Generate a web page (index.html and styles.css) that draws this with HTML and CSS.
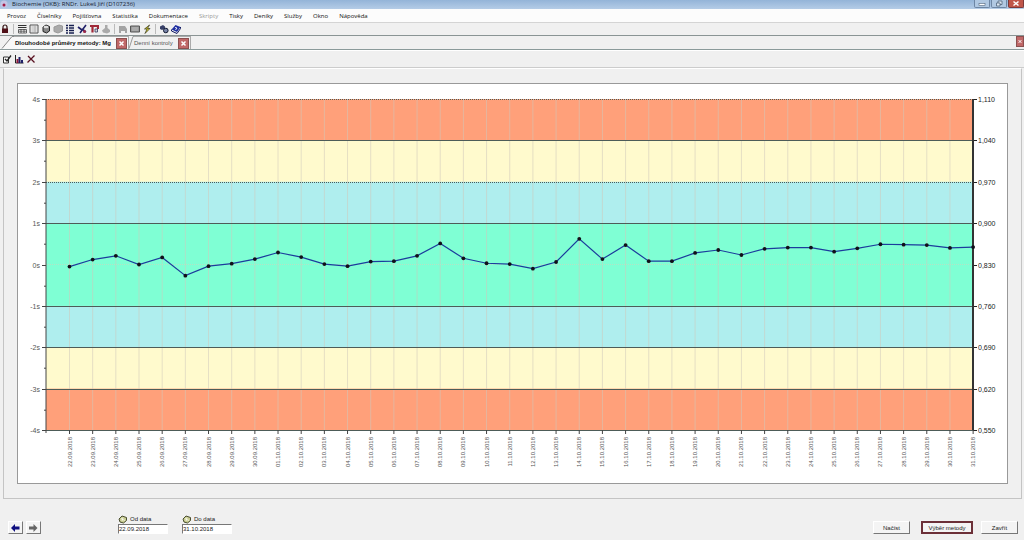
FILE: index.html
```
<!DOCTYPE html>
<html lang="cs">
<head>
<meta charset="utf-8">
<title>Biochemie (OKB)</title>
<link rel="stylesheet" href="styles.css">
</head>
<body>
<header class="titlebar">
  <svg class="app-icon" viewBox="0 0 8 8"><circle cx="4" cy="4" r="3.5" fill="#c4c4e4"/><circle cx="4" cy="5" r="1.5" fill="#a01840"/></svg>
  <span class="title">Biochemie (OKB): RNDr. Lukeš Jiří (D107236)</span>
  <div class="window-buttons">
    <button class="win" aria-label="Minimalizovat"><svg viewBox="0 0 16 8"><rect x="5" y="3.500" width="6" height="2" fill="#fff" stroke="#50647c" stroke-width=".6"/></svg></button>
    <button class="win" aria-label="Obnovit"><svg viewBox="0 0 16 8"><path d="M7 3V1h4v3.500H9M5.500 3H9v3H5.500z" fill="#dce8f4" stroke="#50647c" stroke-width=".8"/></svg></button>
    <button class="win win-close" aria-label="Zavřít okno"><svg viewBox="0 0 16 8"><path d="M5.500 1.500l5 4M10.500 1.500l-5 4" stroke="#fff" stroke-width="1.500"/></svg></button>
  </div>
</header>
<nav class="menu">
  <a href="#">Provoz</a><a href="#">Číselníky</a><a href="#">Pojišťovna</a><a href="#">Statistika</a><a href="#">Dokumentace</a><a href="#" class="disabled">Skripty</a><a href="#">Tisky</a><a href="#">Deníky</a><a href="#">Služby</a><a href="#">Okno</a><a href="#">Nápověda</a>
</nav>
<div class="toolbar">
  <button aria-label="Zámek"><svg viewBox="0 0 10 10"><path d="M3 5V3a2 2 0 0 1 4 0v2" fill="none" stroke="#301010" stroke-width="1.200"/><rect x="2" y="4.500" width="6" height="4.500" fill="#501018"/></svg></button>
  <i class="sep"></i>
  <button aria-label="Tabulka"><svg viewBox="0 0 10 10"><path d="M1 1.500h8.500M1 3.500h8.500" stroke="#333" stroke-width="1"/><path d="M1.500 5.500h8v3.500h-8zM1.500 7.200h8M4 5v4M7 5v4" fill="#fff" stroke="#444" stroke-width=".8"/></svg></button>
  <button aria-label="Formulář"><svg viewBox="0 0 10 10"><path d="M1 1h8v8H1z" fill="#eee" stroke="#555"/><path d="M2.500 3h5M2.500 5h5M2.500 7h5M6 2v6" stroke="#aaa" stroke-width=".8"/></svg></button>
  <button aria-label="Databáze"><svg viewBox="0 0 10 10"><path d="M2 3l3-2 3.500 1.500V7L5.500 9 2 7.500z" fill="#888" stroke="#222"/><ellipse cx="5" cy="3" rx="2.500" ry="1.300" fill="#ddd"/></svg></button>
  <button aria-label="Dokumenty"><svg viewBox="0 0 10 10"><path d="M1 3l5-2 3.500 1v5L5 9 1 7.500z" fill="#aaa" stroke="#999"/></svg></button>
  <button aria-label="Seznam"><svg viewBox="0 0 10 10"><path d="M1 1.500h2M1 4h2M1 6.500h2M1 9h2M4 1.500h5M4 4h5M4 6.500h5M4 9h5" stroke="#182050" stroke-width="1.500"/></svg></button>
  <button aria-label="Upravit"><svg viewBox="0 0 10 10"><path d="M1 3l4 3M9 1L3 9M5 5l4 3" stroke="#202068" stroke-width="1.600"/><circle cx="7.500" cy="7.500" r="1.500" fill="#a02848"/></svg></button>
  <button aria-label="Vzorek"><svg viewBox="0 0 10 10"><path d="M1 2h8v3M3.500 2v6.500" fill="none" stroke="#a02838" stroke-width="2.200"/><path d="M6 5h2.500v3H6z" fill="#ddd" stroke="#30355c" stroke-width=".8"/></svg></button>
  <button aria-label="Zvonek"><svg viewBox="0 0 10 10"><path d="M4 1h2.500v3L9 6v2L6 9.500 2 8.500 1 6.500 4 4z" fill="#aaa"/></svg></button>
  <i class="sep"></i>
  <button aria-label="Tisk"><svg viewBox="0 0 10 10"><path d="M1 2h6l2 3v4H7V7H3v2H1z" fill="#a4a4a4"/></svg></button>
  <button aria-label="Obrazovka"><svg viewBox="0 0 10 10"><path d="M.5 2h9v6h-9z" fill="#999" stroke="#555"/><path d="M2 4h6M2 6h6" stroke="#ccc" stroke-width=".7"/></svg></button>
  <button aria-label="Blesk"><svg viewBox="0 0 10 10"><path d="M7.500 1L2.500 5h2.500L3 9.500 8 4.500H5.500z" fill="#d8d020" stroke="#303020" stroke-width=".7"/></svg></button>
  <i class="sep"></i>
  <button aria-label="Hledat"><svg viewBox="0 0 10 10"><path d="M1 2.500l3-1.500 2 1.500v2L3 6 1 5z" fill="#384068"/><circle cx="6.800" cy="6.500" r="2.300" fill="#7884a8" stroke="#101830"/></svg></button>
  <button aria-label="Nápověda"><svg viewBox="0 0 10 10"><path d="M.5 5.500L4.500 1l5 2L6 8z" fill="#2030a0"/><path d="M.5 5.500v1.500L6 9.500 9.500 4.500V3" fill="none" stroke="#101860"/><path d="M4 3.500l2 .5-1.500 2" fill="none" stroke="#fff" stroke-width=".9"/></svg></button>
</div>
<div class="tabs">
  <svg class="slant" viewBox="0 0 14 13"><path d="M0 12.500h3L12 .5h2V13H0z" fill="#f8f8f8"/><path d="M2 12.500L12 .5h2" fill="none" stroke="#888"/></svg>
  <div class="tab tab-active"><span>Dlouhodobé průměry metody: Mg</span><button class="close" aria-label="Zavřít kartu"><svg viewBox="0 0 9 9"><path d="M2.500 2.500l4 4M6.500 2.500l-4 4" stroke="#fff" stroke-width="1.500"/></svg></button></div>
  <svg class="slant slant-small" viewBox="0 0 5 13"><path d="M0 12.500L4 .5h1" fill="none" stroke="#999"/></svg>
  <div class="tab"><span>Denní kontroly</span><button class="close" aria-label="Zavřít kartu"><svg viewBox="0 0 9 9"><path d="M2.500 2.500l4 4M6.500 2.500l-4 4" stroke="#fff" stroke-width="1.500"/></svg></button></div>
  <button class="close close-all" aria-label="Zavřít vše"><svg viewBox="0 0 9 9"><path d="M2.500 2.500l4 4M6.500 2.500l-4 4" stroke="#fff" stroke-width="1.500"/></svg></button>
</div>
<div class="subtoolbar">
  <button aria-label="Vlastnosti"><svg viewBox="0 0 10 10"><path d="M1.500 3h5v6h-5z" fill="#fff" stroke="#333"/><path d="M3 5l2 2 4-5.500" fill="none" stroke="#222" stroke-width="1.300"/></svg></button>
  <button aria-label="Graf"><svg viewBox="0 0 10 10"><path d="M1.500 1v8H9.500" fill="none" stroke="#222"/><path d="M2.500 5h2v4h-2z" fill="#901838"/><path d="M4.500 3h2v6h-2zM7 6h2v3H7z" fill="#202068"/></svg></button>
  <button aria-label="Odstranit"><svg viewBox="0 0 10 10"><path d="M2 2l6.500 6.500M8.500 1.500L1.500 8.500" stroke="#581020" stroke-width="1.300"/></svg></button>
</div>
<main class="panel">
  <svg id="chart" class="chart" viewBox="0 0 989 399" role="img" aria-label="Dlouhodobé průměry metody Mg"></svg>
</main>
<footer class="bottom">
  <div class="arrows">
    <button class="btn arrow" aria-label="Předchozí"><svg viewBox="0 0 9 8"><path d="M0 4l4-4v2.500h4.500v3H4V8z" fill="#101080"/></svg></button>
    <button class="btn arrow" aria-label="Další"><svg viewBox="0 0 9 8"><path d="M8.500 4l-4-4v2.500H0v3h4.500V8z" fill="#666"/></svg></button>
  </div>
  <div class="dates">
    <div class="field"><label for="from"><svg viewBox="0 0 10 9"><path d="M1 4l3-3 4.500 1.500v3L5.500 8 2 7z" fill="#c8cc90" stroke="#4a4e30"/><path d="M3 3.500l4 2M5 2.500L4 6" stroke="#fff" stroke-width=".7"/></svg>Od data</label><input id="from" value="22.09.2018"></div>
    <div class="field"><label for="to"><svg viewBox="0 0 10 9"><path d="M1 4l3-3 4.500 1.500v3L5.500 8 2 7z" fill="#c8cc90" stroke="#4a4e30"/><path d="M3 3.500l4 2M5 2.500L4 6" stroke="#fff" stroke-width=".7"/></svg>Do data</label><input id="to" value="31.10.2018"></div>
  </div>
  <div class="actions">
    <button class="btn">Načíst</button>
    <button class="btn btn-default">Výběr metody</button>
    <button class="btn btn-exit">Zavřít</button>
  </div>
</footer>
<script src="chart.js"></script>
</body>
</html>
```
FILE: styles.css
```
* { box-sizing: border-box; }
body {
  margin: 0;
  min-height: 100vh;
  display: flex;
  flex-direction: column;
  background: #f0f0f0;
  color: #222;
  font: 6px/8px "Liberation Sans", Arial, sans-serif;
}
button, input { font: inherit; color: inherit; margin: 0; }
button { display: flex; align-items: center; justify-content: center; padding: 0; border: 0; background: none; }
svg { display: block; }

.titlebar {
  display: flex;
  height: 9px;
  align-items: flex-start;
  background: linear-gradient(#94b4d8, #b4cce6);
}
.app-icon { width: 8px; height: 8px; }
.title { margin-left: 4px; font: 6px/9px "Open Sans", sans-serif; color: #14202e; }
.window-buttons { display: flex; margin-left: auto; gap: 1px; }
.win { width: 16px; height: 8px; background: #b0c8e2; border: 1px solid #6d86a4; border-top: 0; border-radius: 0 0 2px 2px; }
.win svg { width: 16px; height: 8px; flex: none; }
.win-close { background: #c0564a; border-color: #7c3a3a; }

.menu {
  display: flex;
  gap: 11px;
  height: 14px;
  padding: 3px 7px 0;
  background: #fcfcfc;
  border-bottom: 1px solid #d4d4d4;
  font-family: "Open Sans", sans-serif;
}
.menu a { color: #111; text-decoration: none; }
.menu .disabled { color: #999; }

.toolbar { display: flex; height: 13px; gap: 2px; align-items: center; border-bottom: 1px solid #8a9494; }
.toolbar svg, .subtoolbar svg { width: 10px; height: 10px; }
.sep { width: 1px; height: 10px; margin: 0 1px; background: #bbb; }

.tabs { display: flex; height: 14px; border-bottom: 1px solid #8a9a9a; }
.slant { width: 14px; height: 13px; }
.slant-small { width: 5px; }
.tab { display: flex; align-items: center; gap: 5px; padding-right: 1px; border-top: 1px solid #aaa; border-right: 1px solid #aaa; }
.tab span { color: #555; }
.tab-active { background: #f8f8f8; }
.tab-active span { padding-left: 1px; font-weight: bold; color: #111; }
.close { width: 11px; height: 11px; background: #c06868; border: 1px solid #8c5050; }
.close svg { width: 9px; height: 9px; }
.close-all { margin-left: auto; width: 8px; overflow: hidden; }

.subtoolbar { display: flex; gap: 2px; height: 18px; padding: 3px 2px; border-top: 1px solid #fff; border-bottom: 1px solid #ccc; }

.panel { margin: 0 2px 0 3px; padding: 14px 13px; border: 1px solid #c4c4c4; border-top-color: #fff; }
.chart { width: 100%; background: #fff; border: 1px solid #999; }
.chart text { font: 7px "Liberation Sans", Arial, sans-serif; }
.chart .axis-date { font-size: 6px; }
.axis-left, .axis-date { fill: #555; }
.axis-right { fill: #222; }
.end { text-anchor: end; }

.bottom { display: flex; padding: 15px 6px 5px 8px; align-items: flex-end; }
.arrows { display: flex; gap: 3px; }
.btn {
  height: 13px;
  width: 37px;
  background: #f4f4f4;
  border: 1px solid #fff;
  border-right-color: #777;
  border-bottom-color: #777;
  white-space: nowrap;
}
.btn.arrow { width: 15px; }
.arrow svg { width: 9px; height: 8px; }
.dates { display: flex; gap: 14px; margin-left: 77px; }
.field { width: 50px; }
.field label { display: flex; gap: 2px; align-items: center; height: 10px; }
.field svg { width: 10px; height: 9px; }
.field input { display: block; width: 100%; height: 10px; padding: 0; border: 1px solid #fff; border-top-color: #777; border-left-color: #777; background: #fff; }
.actions { display: flex; gap: 11px; margin-left: auto; }
.btn.btn-default { width: 52px; border: 2px solid #6c3038; }
.btn-exit { margin-left: -3px; }
```
FILE: chart.js
```
const NS = "http://www.w3.org/2000/svg";
const chart = document.getElementById("chart");
const left = 28, right = 955, top0 = 15, band = 41.375;
const bottom = top0 + 8 * band;

function add(name, attrs, text) {
  const el = document.createElementNS(NS, name);
  for (const key in attrs) el.setAttribute(key, attrs[key]);
  if (text !== undefined) el.textContent = text;
  chart.appendChild(el);
}
function line(x1, y1, x2, y2, stroke, extra) {
  add("line", Object.assign({ x1, y1, x2, y2, stroke, "stroke-width": 1 }, extra));
}

const colors = ["#ffa07a", "#fffacd", "#afeeee", "#7fffd4", "#7fffd4", "#afeeee", "#fffacd", "#ffa07a"];
colors.forEach((fill, i) => add("rect", { x: left, y: top0 + i * band, width: right - left, height: band + .5, fill }));

const step = 23.17, first = 51.5;
// Deviation from the mean, in hundredths of s
const values = [-5, 12, 21, 0, 17, -27, -4, 2, 13, 29, 18, 1, -4, 7, 8, 21, 51, 15, 3, 1, -10, 6, 62, 13, 47, 8, 8, 28, 35, 23, 38, 41, 41, 31, 39, 49, 48, 47, 40, 42];
const mean = top0 + 4 * band;
const points = values.map((v, i) => [first + i * step, mean - v / 100 * band]);

points.forEach(([x]) => line(x, top0, x, bottom, "#cfc9bb", { "stroke-opacity": .55 }));
line(left, mean, right, mean, "#b6e2c4", { "stroke-dasharray": "1 1" });

const labels = ["1,110", "1,040", "0,970", "0,900", "0,830", "0,760", "0,690", "0,620", "0,550"];
labels.forEach((label, i) => {
  const y = Math.round(top0 + i * band) + .5;
  if (i !== 4) line(left, y, right, y, "#4d5c58", i === 0 || i === 2 ? { "stroke-dasharray": "1 1" } : {});
  line(left - 4, y, left, y, "#444");
  if (i < 8) line(left - 2, y + band / 2, left, y + band / 2, "#444");
  line(right, y, right + 4, y, "#222");
  add("text", { x: left - 6, y: y + 2.5, class: "axis-left end" }, (4 - i) + "s");
  add("text", { x: right + 5, y: y + 2.5, class: "axis-right" }, label);
});
line(left, top0, left, bottom + 3, "#444");
line(right, top0, right, bottom, "#333", { "stroke-width": 2 });

points.forEach(([x], i) => {
  const date = new Date(2018, 8, 22 + i);
  const label = String(date.getDate()).padStart(2, "0") + "." + String(date.getMonth() + 1).padStart(2, "0") + ".2018";
  line(x, bottom, x, bottom + 4, "#444");
  add("text", { transform: `translate(${x + 2} ${bottom + 7}) rotate(-90)`, class: "axis-date end" }, label);
});

add("polyline", { points: points.map(p => p.join(",")).join(" "), fill: "none", stroke: "#1c3c9c", "stroke-width": 1.2 });
points.forEach(([cx, cy]) => add("circle", { cx, cy, r: 1.9, fill: "#101018" }));
```
